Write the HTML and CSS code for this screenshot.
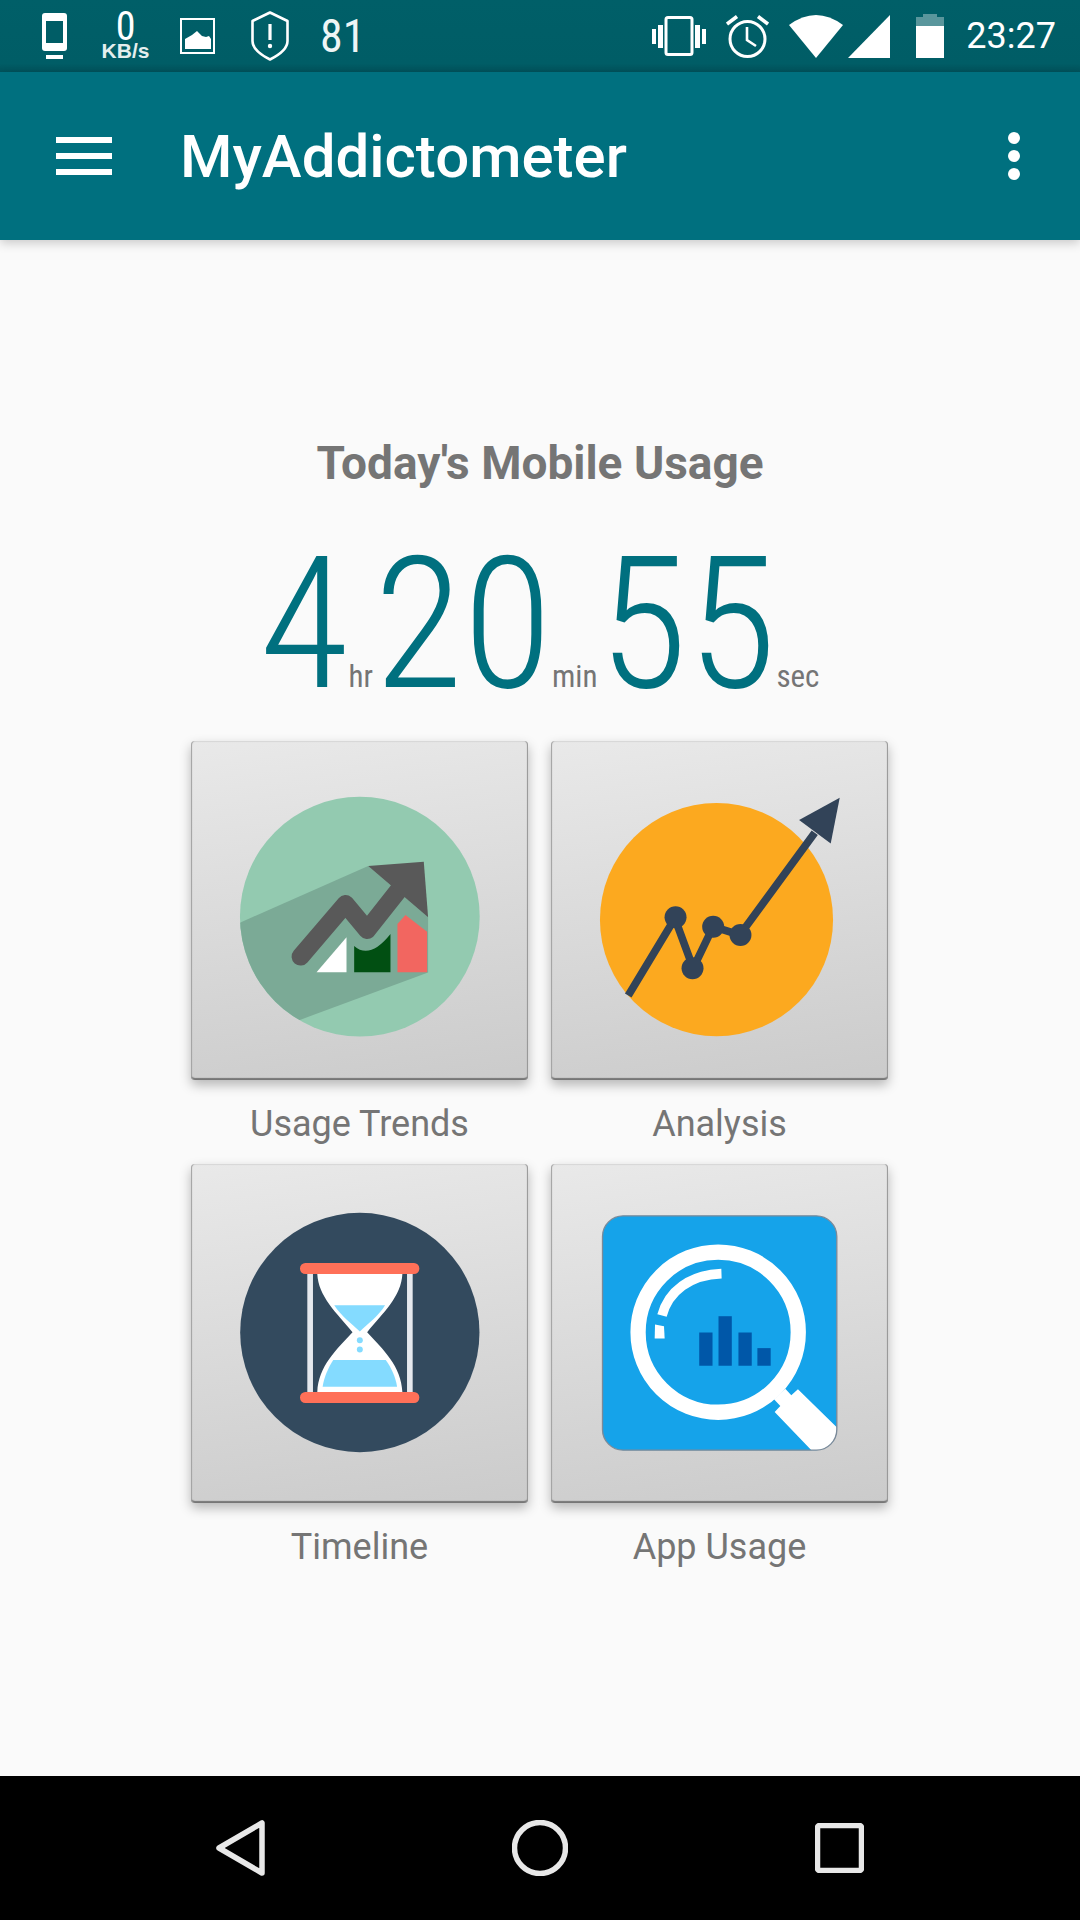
FILE: index.html
```html
<!DOCTYPE html>
<html lang="en">
<head>
<meta charset="UTF-8" />
<meta name="viewport" content="width=device-width, initial-scale=1" />
<title>MyAddictometer</title>
<link rel="stylesheet" href="styles.css">
</head>
<body>
<div class="screen">
  <!-- Status bar -->
  <div class="status-bar">
    <div class="status-left">
      <svg class="ic-phone" viewBox="0 0 26 46"><rect x="1" y="0" width="25" height="38" rx="3" fill="#fff"/><rect x="5" y="8" width="17" height="22" fill="#005d66"/><rect x="5" y="42" width="17" height="4" fill="#fff"/></svg>
      <div class="net-speed"><span class="net-num">0</span><span class="net-unit">KB/s</span></div>
      <svg class="ic-image" viewBox="0 0 35 36"><rect x="1" y="1" width="33" height="34" fill="none" stroke="#fff" stroke-width="2"/><path d="M5 21 L12 17 L17 13 L22 18 L26 19 L29 18 L31 21 V31 H5 Z" fill="#fff"/></svg>
      <svg class="ic-shield" viewBox="0 0 38 50"><path d="M19 1.5 L36.5 10 V30 C36.5 38 28 44 19 48.5 C10 44 1.5 38 1.5 30 V10 Z" fill="none" stroke="#fff" stroke-width="2.6" stroke-linejoin="round"/><rect x="17.4" y="13" width="3.2" height="16" fill="#fff"/><circle cx="19" cy="35" r="2.2" fill="#fff"/></svg>
      <span class="status-count">81</span>
    </div>
    <div class="status-right">
      <svg class="ic-vibrate" viewBox="0 0 54 40"><rect x="14" y="1.5" width="26" height="37" rx="2" fill="none" stroke="#fff" stroke-width="3"/><rect x="0" y="13" width="4" height="15" fill="#fff"/><rect x="6" y="9" width="5" height="23" fill="#fff"/><rect x="43" y="9" width="5" height="23" fill="#fff"/><rect x="50" y="13" width="4" height="15" fill="#fff"/></svg>
      <svg class="ic-alarm" viewBox="0 0 43 43"><circle cx="21.5" cy="24" r="17.5" fill="none" stroke="#fff" stroke-width="3"/><path d="M21 12 V25 L30 31" fill="none" stroke="#fff" stroke-width="2.6"/><path d="M1 9 L11 1.5 M42 9 L32 1.5" stroke="#fff" stroke-width="3.6"/></svg>
      <svg class="ic-wifi" viewBox="0 0 54 43"><path d="M0 10 Q27 -10 54 10 L27 43 Z" fill="#fff"/></svg>
      <svg class="ic-signal" viewBox="0 0 42 43"><path d="M42 0 V43 H0 Z" fill="#fff"/></svg>
      <svg class="ic-battery" viewBox="0 0 28 44"><path d="M7 0 H21 V3 H28 V12 H0 V3 H7 Z" fill="#fff" opacity="0.35"/><rect x="0" y="12" width="28" height="32" fill="#fff"/></svg>
      <span class="status-time">23:27</span>
    </div>
  </div>

  <!-- App bar -->
  <header class="app-bar">
    <div class="hamburger"><span></span><span></span><span></span></div>
    <h1 class="app-title">MyAddictometer</h1>
    <div class="overflow-menu"><span></span><span></span><span></span></div>
  </header>

  <main class="content">
    <h2 class="usage-title">Today's Mobile Usage</h2>
    <div class="timer">
      <span class="timer-num">4</span><span class="timer-unit">hr</span>
      <span class="timer-num">20</span><span class="timer-unit">min</span>
      <span class="timer-num">55</span><span class="timer-unit">sec</span>
    </div>

    <div class="tiles">
      <div class="tile">
        <div class="tile-card">
          <svg class="tile-icon" viewBox="33 33 1012 1017">
            <defs><clipPath id="trendClip"><circle cx="540" cy="560" r="360"/></clipPath></defs>
            <circle cx="540" cy="560" r="360" fill="#93cab0"/>
            <path d="M180 578 L565 408 L745 562 V728 L360 870 L100 900 Z" fill="#7baa96" clip-path="url(#trendClip)"/>
            <path d="M362 680 L497 522 L562 600 L660 476" fill="none" stroke="#595959" stroke-width="54" stroke-linecap="round" stroke-linejoin="round"/>
            <path d="M565 408 L732 395 L745 562 Z" fill="#595959"/>
            <path d="M410 727 L500 622 V727 Z" fill="#fff"/>
            <path d="M523 648 Q570 690 632 612 V727 H523 Z" fill="#014f12"/>
            <path d="M653 582 L677 555 L742 605 V727 H653 Z" fill="#f26660"/>
          </svg>
        </div>
        <div class="tile-label">Usage Trends</div>
      </div>
      <div class="tile">
        <div class="tile-card">
          <svg class="tile-icon" viewBox="33 33 1012 1017">
            <circle cx="530" cy="569" r="350" fill="#fca91f"/>
            <path d="M265 797 L405 565 L460 715 L520 590 L600 615 L825 308" fill="none" stroke="#324358" stroke-width="23"/>
            <circle cx="407" cy="562" r="33" fill="#324358"/>
            <circle cx="458" cy="715" r="33" fill="#324358"/>
            <circle cx="520" cy="590" r="33" fill="#324358"/>
            <circle cx="602" cy="615" r="33" fill="#324358"/>
            <path d="M778 270 L900 203 L873 340 Z" fill="#324358"/>
          </svg>
        </div>
        <div class="tile-label">Analysis</div>
      </div>
      <div class="tile">
        <div class="tile-card">
          <svg class="tile-icon" viewBox="33 42 1012 1020">
            <circle cx="540" cy="549" r="360" fill="#334a5e"/>
            <rect x="382" y="365" width="17" height="370" fill="#e6e9ee"/>
            <rect x="682" y="365" width="17" height="370" fill="#e6e9ee"/>
            <path d="M412 373 H668 C665 440 610 490 562 548 C610 600 665 650 668 728 H412 C415 650 470 600 518 548 C470 490 415 440 412 373 Z" fill="#fff"/>
            <path d="M463 467 H616 C596 500 565 522 540 546 C515 522 484 500 463 467 Z" fill="#84dbff"/>
            <path d="M460 632 H618 C635 655 648 685 652 712 H428 C432 685 445 655 460 632 Z" fill="#84dbff"/>
            <circle cx="540" cy="572" r="9" fill="#84dbff"/>
            <circle cx="540" cy="600" r="9" fill="#84dbff"/>
            <rect x="360" y="340" width="359" height="33" rx="16" fill="#ff7058"/>
            <rect x="360" y="728" width="359" height="33" rx="16" fill="#ff7058"/>
          </svg>
        </div>
        <div class="tile-label">Timeline</div>
      </div>
      <div class="tile">
        <div class="tile-card">
          <svg class="tile-icon" viewBox="33 42 1012 1020">
            <defs><clipPath id="lensClip"><rect x="187" y="198" width="705" height="705" rx="62"/></clipPath></defs>
            <rect x="187" y="198" width="705" height="705" rx="62" fill="#15a3ea"/>
            <circle cx="535" cy="548" r="241" fill="none" stroke="#fff" stroke-width="46"/>
            <path d="M366 498 C385 425 450 375 545 372" fill="none" stroke="#fff" stroke-width="29"/>
            <path d="M345 525 L372 530 L374 567 H344 Z" fill="#fff"/>
            <path d="M737 718 L755 738 L775 720 L900 842 V910 H822 L705 788 L722 770 L703 750 Z" fill="#fff" clip-path="url(#lensClip)"/>
            <rect x="478" y="549" width="40" height="100" fill="#0057a8"/>
            <rect x="536" y="500" width="40" height="149" fill="#0057a8"/>
            <rect x="596" y="549" width="40" height="100" fill="#0057a8"/>
            <rect x="653" y="596" width="40" height="53" fill="#0057a8"/>
            <rect x="187" y="198" width="705" height="705" rx="62" fill="none" stroke="#7b8a99" stroke-width="4"/>
          </svg>
        </div>
        <div class="tile-label">App Usage</div>
      </div>
    </div>
  </main>

  <!-- Navigation bar -->
  <nav class="nav-bar">
    <svg class="nav-back" viewBox="0 0 49 56"><path d="M46 3 V53 L3 28 Z" fill="none" stroke="#e8e8e8" stroke-width="5.5" stroke-linejoin="round"/></svg>
    <svg class="nav-home" viewBox="0 0 56 56"><circle cx="28" cy="28" r="25.5" fill="none" stroke="#e8e8e8" stroke-width="5.5"/></svg>
    <svg class="nav-recent" viewBox="0 0 49 50"><rect x="2.5" y="2.5" width="44" height="45" rx="2" fill="none" stroke="#e8e8e8" stroke-width="5.5"/></svg>
  </nav>
</div>
</body>
</html>
```

FILE: styles.css
```css
* {
  box-sizing: border-box;
}
body {
  margin: 0;
  font-family: Roboto, "Noto Sans", sans-serif;
  background: #fafafa;
}
.screen {
  width: 1080px;
  height: 1920px;
  display: flex;
  flex-direction: column;
  overflow: hidden;
}

/* Status bar */
.status-bar {
  height: 72px;
  flex: none;
  background: linear-gradient(#005f68 0, #005d66 88%, #00535c 100%);
  color: #fff;
  display: flex;
  justify-content: space-between;
  align-items: center;
  padding: 0 24px 0 41px;
}
.status-left,
.status-right {
  display: flex;
  align-items: center;
}
.ic-phone { width: 26px; height: 46px; }
.net-speed {
  width: 51px;
  margin-left: 33px;
  display: flex;
  flex-direction: column;
  align-items: center;
}
.net-num { font-size: 40px; height: 29px; line-height: 29px; font-stretch: 75%; }
.net-unit { font-size: 21px; height: 19px; line-height: 19px; font-weight: 700; font-family: "Liberation Sans", sans-serif; color: #e4eeee; }
.ic-image { width: 35px; height: 36px; margin-left: 29px; }
.ic-shield { width: 38px; height: 50px; margin-left: 36px; }
.status-count { font-size: 46px; margin-left: 31px; font-stretch: 75%; color: #eef5f5; }
.ic-vibrate { width: 54px; height: 40px; }
.ic-alarm { width: 43px; height: 43px; margin-left: 20px; }
.ic-wifi { width: 54px; height: 43px; margin-left: 20px; }
.ic-signal { width: 42px; height: 43px; margin-left: 5px; }
.ic-battery { width: 28px; height: 44px; margin-left: 26px; }
.status-time { font-size: 36px; margin-left: 22px; }

/* App bar */
.app-bar {
  height: 168px;
  flex: none;
  background: #00707f;
  box-shadow: 0 3px 10px rgba(0,0,0,0.2);
  display: flex;
  align-items: center;
  padding: 0 0 0 56px;
  color: #fff;
}
.hamburger {
  width: 56px;
  display: flex;
  flex-direction: column;
  gap: 10px;
}
.hamburger span {
  height: 6px;
  background: #fff;
}
.app-title {
  margin: 0 0 0 68px;
  font-size: 60px;
  font-weight: 500;
  flex: 1;
}
.overflow-menu {
  display: flex;
  flex-direction: column;
  gap: 6px;
  margin-right: 60px;
}
.overflow-menu span {
  width: 12px;
  height: 12px;
  border-radius: 50%;
  background: #fff;
}

/* Main content */
.content {
  flex: 1;
  padding-top: 198px;
}
.usage-title {
  margin: 0;
  font-size: 46px;
  font-weight: 700;
  line-height: 50px;
  color: #757575;
  text-align: center;
}
.timer {
  margin-top: 29px;
  display: flex;
  justify-content: center;
  align-items: baseline;
  height: 224px;
}
.timer-num {
  font-size: 183px;
  font-weight: 340;
  font-stretch: 75%;
  color: #00707f;
  line-height: 215px;
}
.timer-unit {
  font-size: 31px;
  font-stretch: 75%;
  color: #757575;
  margin: 0 1px 0 0;
}
.tiles {
  display: grid;
  grid-template-columns: 337px 337px;
  column-gap: 23px;
  grid-auto-rows: 423px;
  padding-left: 191px;
}
.tile-card {
  width: 337px;
  height: 339px;
  border-radius: 4px;
  background: linear-gradient(172deg, #e9e9e9 0, #cbcbcb 100%);
  box-shadow: inset 2px 0 1px -1px #a0a0a0, inset -2px 0 1px -1px #949494, inset 0 2px 1px -1px #d6d6d6, inset 0 -3px 1px -1px #767676, 0 5px 12px rgba(0,0,0,0.28);
}
.tile-icon {
  display: block;
  width: 100%;
  height: 100%;
}
.tile-label {
  margin-top: 24px;
  font-size: 36px;
  line-height: 40px;
  text-align: center;
  color: #757575;
}

/* Navigation bar */
.nav-bar {
  height: 144px;
  flex: none;
  background: #000;
  display: flex;
  justify-content: space-between;
  align-items: center;
  padding: 0 216px;
}
.nav-back { width: 49px; height: 56px; }
.nav-home { width: 56px; height: 56px; }
.nav-recent { width: 49px; height: 50px; }
```
